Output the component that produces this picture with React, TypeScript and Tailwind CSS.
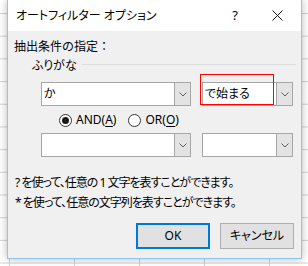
import React from 'react';

const jp = 'font-["Noto_Sans","Noto_Sans_CJK_JP",sans-serif] [font-feature-settings:"palt"]';

function Chevron() {
  return (
    <svg width="8" height="5" viewBox="0 0 8 5" className="block">
      <polyline points="0.5,0.5 4,4 7.5,0.5" fill="none" stroke="#606060" strokeWidth="1" />
    </svg>
  );
}

function Combo({ width, value }: { width: string; value?: string }) {
  return (
    <div className={`flex h-[24px] ${width} border border-[#a6a6a6] bg-white`}>
      <div className="flex flex-1 items-center pl-[2px] text-[12px] text-black">{value}</div>
      <div className="flex w-[16px] items-center justify-center border-l border-[#a6a6a6] bg-[#e3e3e3]">
        <Chevron />
      </div>
    </div>
  );
}

function Radio({ checked, label, hot }: { checked?: boolean; label: string; hot: string }) {
  return (
    <div className="flex items-center gap-[4px]">
      <div className="flex h-[13px] w-[13px] items-center justify-center rounded-full border border-[#333333] bg-white">
        {checked && <div className="h-[7px] w-[7px] rounded-full bg-[#1a1a1a]" />}
      </div>
      <span className="text-[12px] text-black">
        {label}(<span className="underline underline-offset-2">{hot}</span>)
      </span>
    </div>
  );
}

export default function App() {
  return (
    <div
      className={`relative h-[266px] w-[308px] overflow-hidden bg-white bg-[linear-gradient(#d2d2d2_1px,transparent_1px),linear-gradient(90deg,#d2d2d2_1px,transparent_1px)] bg-[size:65px_22.7px] bg-[position:9px_13px] ${jp}`}
    >
      <div className="ml-[7px] flex h-[259px] w-[295px] flex-col border border-t-0 border-[#8ec5f0] bg-[#f0f0f0] shadow-[0_0_8px_rgba(0,0,0,0.28)]">
        {/* title bar */}
        <div className="flex h-[31px] items-center justify-between bg-white pl-[8px] pr-[3px]">
          <span className="text-[12px] text-black">オートフィルター オプション</span>
          <div className="flex h-full">
            <div className="flex w-[42px] items-center justify-center text-[13px] text-black">?</div>
            <div className="flex w-[42px] items-center justify-center">
              <svg width="11" height="11" viewBox="0 0 11 11">
                <path d="M0.5 0.5L10.5 10.5M10.5 0.5L0.5 10.5" stroke="#111" strokeWidth="1" />
              </svg>
            </div>
          </div>
        </div>

        {/* body */}
        <div className="flex flex-col pl-[6px] pr-[5px] pt-[7px]">
          <div className="h-[18px] text-[12px] leading-[18px] text-black [font-feature-settings:normal]">抽出条件の指定：</div>
          <div className="mt-[1px] flex h-[18px] items-center pl-[18px]">
            <span className="text-[12px] leading-[18px] text-black">ふりがな</span>
            <div className="ml-[5px] -mt-[3px] h-px flex-1 bg-[#dcdcdc]" />
          </div>

          <div className="ml-[27px] mt-[7px] flex gap-[11px]">
            <Combo width="w-[150px]" value="か" />
            <Combo width="w-[91px]" value="で始まる" />
          </div>

          <div className="ml-[45px] mt-[5px] flex h-[18px] items-center gap-[12px]">
            <Radio checked label="AND" hot="A" />
            <Radio label="OR" hot="O" />
          </div>

          <div className="ml-[27px] mt-[4px] flex gap-[11px]">
            <Combo width="w-[150px]" />
            <Combo width="w-[91px]" />
          </div>

          <div className="mt-[16px] pl-[1px] text-[12px] leading-[20px] tracking-[-1px] text-black">
            <div>? を使って、任意の 1 文字を表すことができます。</div>
            <div>* を使って、任意の文字列を表すことができます。</div>
          </div>

          <div className="mt-[10px] flex justify-end gap-[10px] pr-[2px]">
            <button className="flex h-[26px] w-[74px] items-center justify-center border-2 border-[#0078d7] bg-[#e1e1e1] text-[12px] text-black">
              OK
            </button>
            <button className="flex h-[26px] w-[74px] items-center justify-center border border-[#adadad] bg-[#e1e1e1] text-[12px] text-black">
              キャンセル
            </button>
          </div>
        </div>
      </div>

      {/* red annotation box */}
      <div className="absolute left-[200px] top-[74px] h-[31px] w-[74px] border border-[#ff0000]" />
    </div>
  );
}
